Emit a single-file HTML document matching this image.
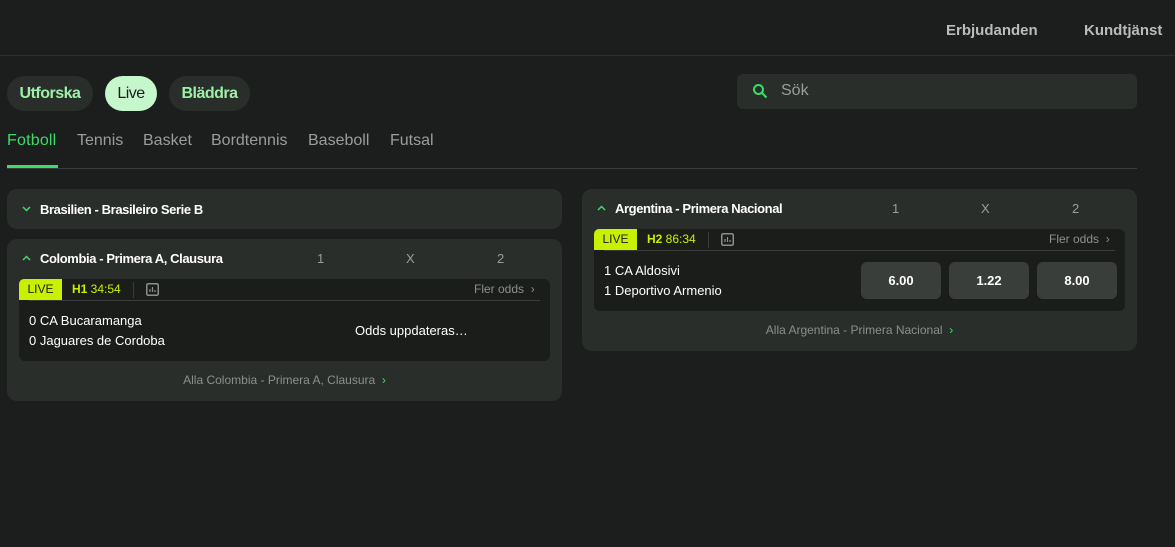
<!DOCTYPE html>
<html><head><meta charset="utf-8"><style>
*{margin:0;padding:0;box-sizing:border-box}
body{width:1175px;height:547px;background:#1b1e1c;font-family:"Liberation Sans",sans-serif;color:#fff;position:relative;overflow:hidden}
.a{position:absolute}
.top{left:0;top:55px;width:1175px;height:1px;background:#2c302d}
.nav{top:22px;font-size:15px;font-weight:bold;color:#b9bdb9}
.pill{top:76px;height:35px;border-radius:18px;background:#2a2e2b;color:#9ef0a8;font-weight:bold;font-size:16px;line-height:35px;text-align:center;letter-spacing:-0.5px}
.tab{top:132px;font-size:16px;color:#9a9e9a}
.card{background:#2a2e2b;border-radius:10px}
.ttl{font-size:13px;font-weight:bold;letter-spacing:-0.4px}
.col{font-size:13px;color:#9a9e9a}
.inner{background:#1b1d1b;border-radius:6px}
.live{background:#c8f000;color:#1b1d1b;font-size:12px;width:43px;height:21px;line-height:21px;text-align:center;border-radius:5px 0 0 0}
.per{font-size:12px;color:#c8f000}
.fler{font-size:12px;color:#8c908c}
.team{font-size:13px}
.odd{background:#3a3e3b;border-radius:6px;width:80px;height:37px;line-height:37px;text-align:center;font-size:13px;font-weight:bold}
.all{font-size:12px;color:#8c908c;text-align:center}
</style></head><body>
<div class="a top"></div>
<div class="a nav" style="left:946px">Erbjudanden</div>
<div class="a nav" style="left:1084px">Kundtjänst</div>
<div class="a pill" style="left:7px;width:86px">Utforska</div>
<div class="a pill" style="left:105px;width:52px;background:#c6f7cc;color:#1b1e1c;font-weight:normal">Live</div>
<div class="a pill" style="left:169px;width:81px">Bläddra</div>
<div class="a" style="left:737px;top:74px;width:400px;height:35px;background:#2a2e2b;border-radius:6px">
<svg class="a" style="left:15px;top:9px" width="16" height="16" viewBox="0 0 16 16"><circle cx="6.5" cy="6.5" r="4.5" fill="none" stroke="#3ddc6a" stroke-width="2"/><path d="M10 10l4.5 4.5" stroke="#3ddc6a" stroke-width="2"/></svg>
<span class="a" style="left:44px;top:8px;font-size:16px;color:#9a9e9a">Sök</span></div>
<div class="a tab" style="left:7px;color:#3ddc6a;letter-spacing:0.2px">Fotboll</div>
<div class="a tab" style="left:77px">Tennis</div>
<div class="a tab" style="left:143px">Basket</div>
<div class="a tab" style="left:211px">Bordtennis</div>
<div class="a tab" style="left:308px">Baseboll</div>
<div class="a tab" style="left:390px">Futsal</div>
<div class="a" style="left:7px;top:168px;width:1130px;height:1px;background:#3a3e3b"></div>
<div class="a" style="left:7px;top:165px;width:51px;height:3px;background:#3ddc6a"></div>

<div class="a card" style="left:7px;top:189px;width:555px;height:40px">
<svg class="a" style="left:15px;top:17px" width="9" height="6" viewBox="0 0 9 6"><path d="M1 1l3.5 3.5L8 1" fill="none" stroke="#3ddc6a" stroke-width="1.5"/></svg>
<span class="a ttl" style="left:33px;top:13px">Brasilien - Brasileiro Serie B</span></div>

<div class="a card" style="left:7px;top:239px;width:555px;height:162px">
<svg class="a" style="left:15px;top:16px" width="9" height="6" viewBox="0 0 9 6"><path d="M1 5l3.5-3.5L8 5" fill="none" stroke="#3ddc6a" stroke-width="1.5"/></svg>
<span class="a ttl" style="left:33px;top:12px">Colombia - Primera A, Clausura</span>
<span class="a col" style="left:310px;top:12px">1</span><span class="a col" style="left:399px;top:12px">X</span><span class="a col" style="left:490px;top:12px">2</span>
<div class="a inner" style="left:12px;top:40px;width:531px;height:82px">
<div class="a live" style="left:0;top:0">LIVE</div>
<span class="a per" style="left:53px;top:3px"><b>H1</b> 34:54</span>
<div class="a" style="left:114px;top:3px;width:1px;height:16px;background:#3a3e3b"></div>
<svg class="a" style="left:127px;top:4px" width="13" height="13" viewBox="0 0 13 13"><rect x="0.75" y="0.75" width="11.5" height="11.5" rx="1.5" fill="none" stroke="#8c908c" stroke-width="1.5"/><path d="M4 9V6M6.5 9V4M9 9V7" stroke="#8c908c" stroke-width="1.2"/></svg>
<span class="a fler" style="left:455px;top:3px">Fler odds &nbsp;›</span>
<div class="a" style="left:10px;top:21px;width:511px;height:1px;background:#3a3e3b"></div>
<span class="a team" style="left:10px;top:34px">0 CA Bucaramanga</span>
<span class="a team" style="left:10px;top:54px">0 Jaguares de Cordoba</span>
<span class="a team" style="left:336px;top:44px">Odds uppdateras…</span>
</div>
<div class="a all" style="left:0;top:134px;width:555px">Alla Colombia - Primera A, Clausura &nbsp;<span style="color:#3ddc6a">›</span></div>
</div>

<div class="a card" style="left:582px;top:189px;width:555px;height:162px">
<svg class="a" style="left:15px;top:16px" width="9" height="6" viewBox="0 0 9 6"><path d="M1 5l3.5-3.5L8 5" fill="none" stroke="#3ddc6a" stroke-width="1.5"/></svg>
<span class="a ttl" style="left:33px;top:12px">Argentina - Primera Nacional</span>
<span class="a col" style="left:310px;top:12px">1</span><span class="a col" style="left:399px;top:12px">X</span><span class="a col" style="left:490px;top:12px">2</span>
<div class="a inner" style="left:12px;top:40px;width:531px;height:82px">
<div class="a live" style="left:0;top:0">LIVE</div>
<span class="a per" style="left:53px;top:3px"><b>H2</b> 86:34</span>
<div class="a" style="left:114px;top:3px;width:1px;height:16px;background:#3a3e3b"></div>
<svg class="a" style="left:127px;top:4px" width="13" height="13" viewBox="0 0 13 13"><rect x="0.75" y="0.75" width="11.5" height="11.5" rx="1.5" fill="none" stroke="#8c908c" stroke-width="1.5"/><path d="M4 9V6M6.5 9V4M9 9V7" stroke="#8c908c" stroke-width="1.2"/></svg>
<span class="a fler" style="left:455px;top:3px">Fler odds &nbsp;›</span>
<div class="a" style="left:10px;top:21px;width:511px;height:1px;background:#3a3e3b"></div>
<span class="a team" style="left:10px;top:34px">1 CA Aldosivi</span>
<span class="a team" style="left:10px;top:54px">1 Deportivo Armenio</span>
<div class="a odd" style="left:267px;top:33px">6.00</div>
<div class="a odd" style="left:355px;top:33px">1.22</div>
<div class="a odd" style="left:443px;top:33px">8.00</div>
</div>
<div class="a all" style="left:0;top:134px;width:555px">Alla Argentina - Primera Nacional &nbsp;<span style="color:#3ddc6a">›</span></div>
</div>
</body></html>
